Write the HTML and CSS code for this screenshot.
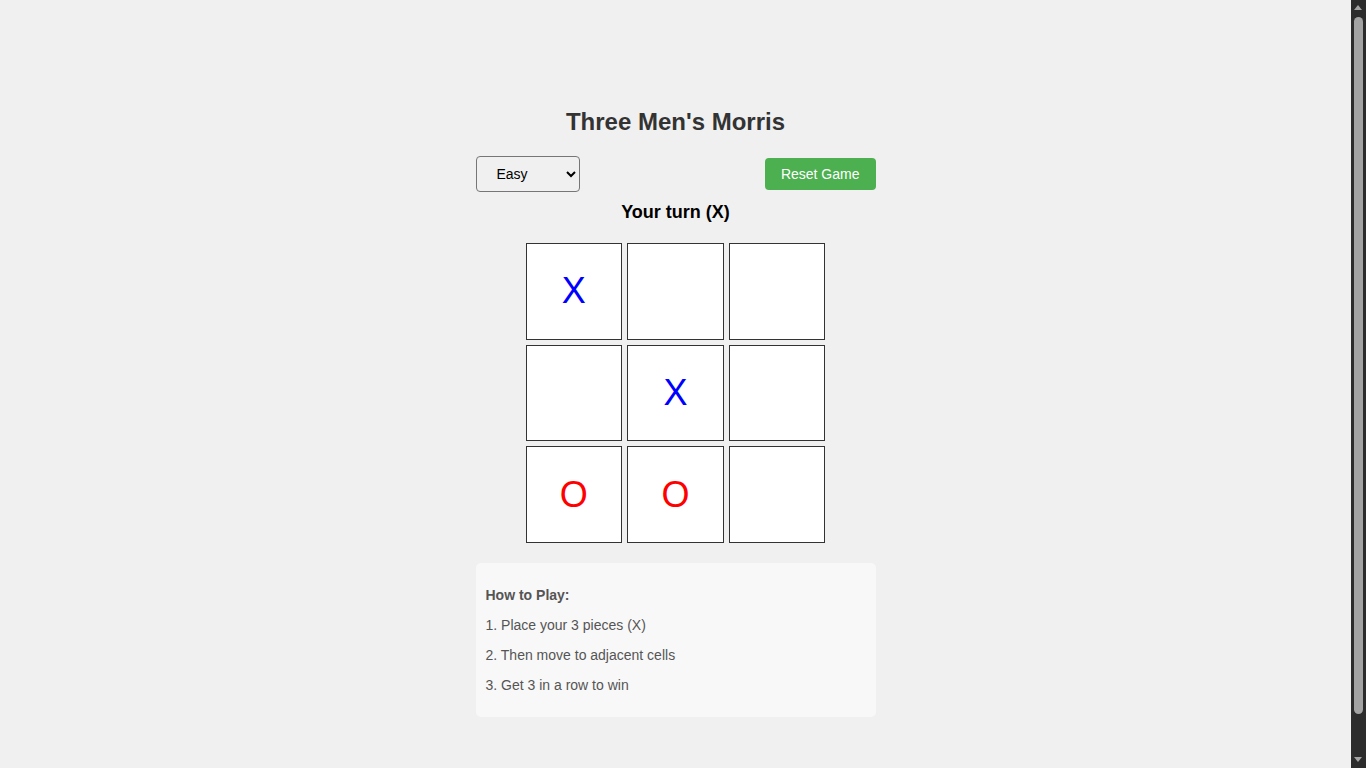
FILE: index.html
```html
<!DOCTYPE html>
<html lang="en">
<head>
<meta charset="utf-8">
<title>Three Men's Morris</title>
<link rel="stylesheet" href="styles.css">
</head>
<body>
<div class="game">
  <h1 class="title">Three Men's Morris</h1>
  <div class="controls">
    <select class="difficulty">
      <option>Easy</option>
      <option>Medium</option>
      <option>Hard</option>
    </select>
    <button class="reset">Reset Game</button>
  </div>
  <div class="status">Your turn (X)</div>
  <div class="board">
    <div class="cell x">X</div>
    <div class="cell"></div>
    <div class="cell"></div>
    <div class="cell"></div>
    <div class="cell x">X</div>
    <div class="cell"></div>
    <div class="cell o">O</div>
    <div class="cell o">O</div>
    <div class="cell"></div>
  </div>
  <div class="info">
    <p><strong>How to Play:</strong></p>
    <p>1. Place your 3 pieces (X)</p>
    <p>2. Then move to adjacent cells</p>
    <p>3. Get 3 in a row to win</p>
  </div>
</div>
<div class="scrollbar" aria-hidden="true">
  <span class="arrow-up"></span>
  <span class="thumb"></span>
  <span class="arrow-down"></span>
</div>
</body>
</html>
```
FILE: styles.css
```css
html, body {
  background: #f0f0f0;
}
body {
  margin: 0 15px 0 0;
  padding: 8px 0;
  min-height: 100vh;
  font-family: "Liberation Sans", Arial, sans-serif;
}
.game {
  width: 400px;
  margin: 0 auto;
  padding-top: 100px;
  text-align: center;
}
.title {
  margin: 0 0 20px;
  font-size: 24px;
  line-height: 28px;
  color: #333;
}
.controls {
  display: flex;
  justify-content: space-between;
  align-items: center;
}
.difficulty {
  width: 104px;
  height: 36px;
  padding: 8px 8px 8px 16px;
  font-family: "Liberation Sans", Arial, sans-serif;
  font-size: 14px;
  border: 1px solid #767676;
  border-radius: 4px;
  background: #f0f0f0;
  color: #000;
}
.reset {
  background: #4caf50;
  color: #fff;
  border: none;
  border-radius: 4px;
  padding: 8px 16px;
  font-family: "Liberation Sans", Arial, sans-serif;
  font-size: 14px;
  line-height: 16px;
}
.status {
  margin: 10px 0 20px;
  font-size: 18px;
  line-height: 21px;
  font-weight: bold;
  color: #000;
}
.board {
  width: 300px;
  height: 300px;
  margin: 0 auto;
  display: grid;
  grid-template-columns: repeat(3, 1fr);
  grid-template-rows: repeat(3, 1fr);
  gap: 5px;
}
.cell {
  background: #fff;
  border: 1px solid #333;
  display: flex;
  align-items: center;
  justify-content: center;
  font-size: 36px;
}
.cell.x { color: #0000ff; }
.cell.o { color: #ff0000; }
.info {
  margin-top: 20px;
  padding: 10px;
  background: #f8f8f8;
  border-radius: 5px;
  color: #555;
  font-size: 14px;
  line-height: 16px;
  text-align: left;
}
.info p {
  margin: 14px 0;
}
.scrollbar {
  position: fixed;
  top: 0;
  right: 0;
  width: 15px;
  height: 100vh;
  background: #2c2c2c;
}
.arrow-up,
.arrow-down {
  position: absolute;
  left: 3px;
  width: 0;
  height: 0;
  border-left: 4.5px solid transparent;
  border-right: 4.5px solid transparent;
}
.arrow-up {
  top: 5px;
  border-bottom: 5px solid #a3a3a3;
}
.arrow-down {
  bottom: 6px;
  border-top: 5px solid #a3a3a3;
}
.thumb {
  position: absolute;
  top: 17px;
  bottom: 54px;
  left: 3px;
  width: 9px;
  border-radius: 5px;
  background: #a3a3a3;
}
```
